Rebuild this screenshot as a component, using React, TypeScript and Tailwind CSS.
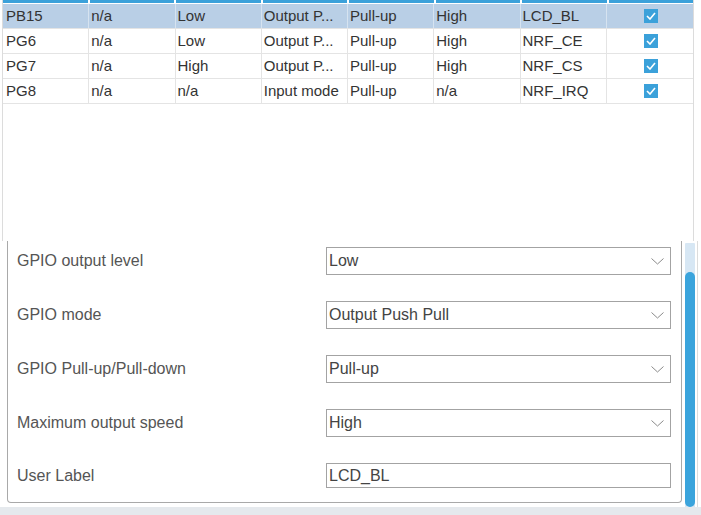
import React from 'react';

type Row = { pin: string; sig: string; level: string; mode: string; pull: string; speed: string; label: string; selected?: boolean };

const rows: Row[] = [
  { pin: 'PB15', sig: 'n/a', level: 'Low', mode: 'Output P...', pull: 'Pull-up', speed: 'High', label: 'LCD_BL', selected: true },
  { pin: 'PG6', sig: 'n/a', level: 'Low', mode: 'Output P...', pull: 'Pull-up', speed: 'High', label: 'NRF_CE' },
  { pin: 'PG7', sig: 'n/a', level: 'High', mode: 'Output P...', pull: 'Pull-up', speed: 'High', label: 'NRF_CS' },
  { pin: 'PG8', sig: 'n/a', level: 'n/a', mode: 'Input mode', pull: 'Pull-up', speed: 'n/a', label: 'NRF_IRQ' },
];

const fields: { label: string; value: string; select: boolean }[] = [
  { label: 'GPIO output level', value: 'Low', select: true },
  { label: 'GPIO mode', value: 'Output Push Pull', select: true },
  { label: 'GPIO Pull-up/Pull-down', value: 'Pull-up', select: true },
  { label: 'Maximum output speed', value: 'High', select: true },
  { label: 'User Label', value: 'LCD_BL', select: false },
];

// small checked box like the eclipse table
const Check = () => (
  <span className="w-[14px] h-[14px] bg-[#3ba1da] flex items-center justify-center">
    <svg width="10" height="8" viewBox="0 0 10 8" fill="none">
      <path d="M1 4 L4 7 L9 1" stroke="white" strokeWidth="1.6" />
    </svg>
  </span>
);

const Chevron = () => (
  <svg width="13" height="7" viewBox="0 0 13 7" fill="none">
    <path d="M0.5 0.5 L6.5 6 L12.5 0.5" stroke="#8a8a8a" strokeWidth="1" />
  </svg>
);

export default function App() {
  return (
    <div className="w-[701px] h-[515px] bg-white overflow-hidden flex flex-col text-[#333]" style={{ fontFamily: '"Liberation Sans", Arial, sans-serif' }}>
      {/* pin table */}
      <div className="h-[241px] ml-[2px] w-[692px] border-l border-r border-[#dcdcdc] flex flex-col text-[15px]">
        <div className="h-[3px] grid grid-cols-8 gap-x-[2px] shrink-0">
          {Array.from({ length: 8 }).map((_, i) => (
            <div key={i} className="bg-[#3ba1da]" />
          ))}
        </div>
        <div className="h-px bg-white shrink-0" />
        {rows.map((r) => (
          <div key={r.pin} className={`grid grid-cols-8 h-[25px] border-b border-[#e4e4e4] ${r.selected ? 'bg-[#b9cfe6]' : 'bg-white'}`}>
            {[r.pin, r.sig, r.level, r.mode, r.pull, r.speed, r.label].map((c, i) => (
              <div key={i} className={`flex items-center border-r ${r.selected ? 'border-[#d6e3f0]' : 'border-[#e4e4e4]'} ${i === 0 ? 'pl-[3px]' : 'pl-[2px]'} whitespace-nowrap overflow-hidden`}>
                {c}
              </div>
            ))}
            <div className="flex items-center justify-center pl-[2px]">
              <Check />
            </div>
          </div>
        ))}
      </div>

      {/* pin configuration */}
      <div className="flex h-[266px] text-[16px]">
        <div className="ml-[7px] w-[675px] h-[262px] border-l border-r border-b border-[#a9a9a9] rounded-b-[4px] pt-[6px] pb-[14px] flex flex-col gap-[26px]">
          {fields.map((f) => (
            <div key={f.label} className="flex items-center">
              <div className="w-[318px] pl-[9px] text-[#555]">{f.label}</div>
              <div className={`w-[345px] ${f.select ? 'h-[28px]' : 'h-[25px]'} border border-[#a3a3a3] flex items-center justify-between pl-[2px] pr-[6px] text-[#444]`}>
                <span>{f.value}</span>
                {f.select && <Chevron />}
              </div>
            </div>
          ))}
        </div>
        <div className="ml-[3px] mt-[2px] w-[10px] bg-[#d7e7f4] rounded-t-[1px] flex flex-col">
          <div className="mt-[29px] flex-1 bg-[#3ba4dc] rounded-full" />
        </div>
        <div className="ml-[2px] w-px bg-[#dcdcdc]" />
      </div>
      <div className="flex-1 bg-[#e5e9ed]" />
    </div>
  );
}
